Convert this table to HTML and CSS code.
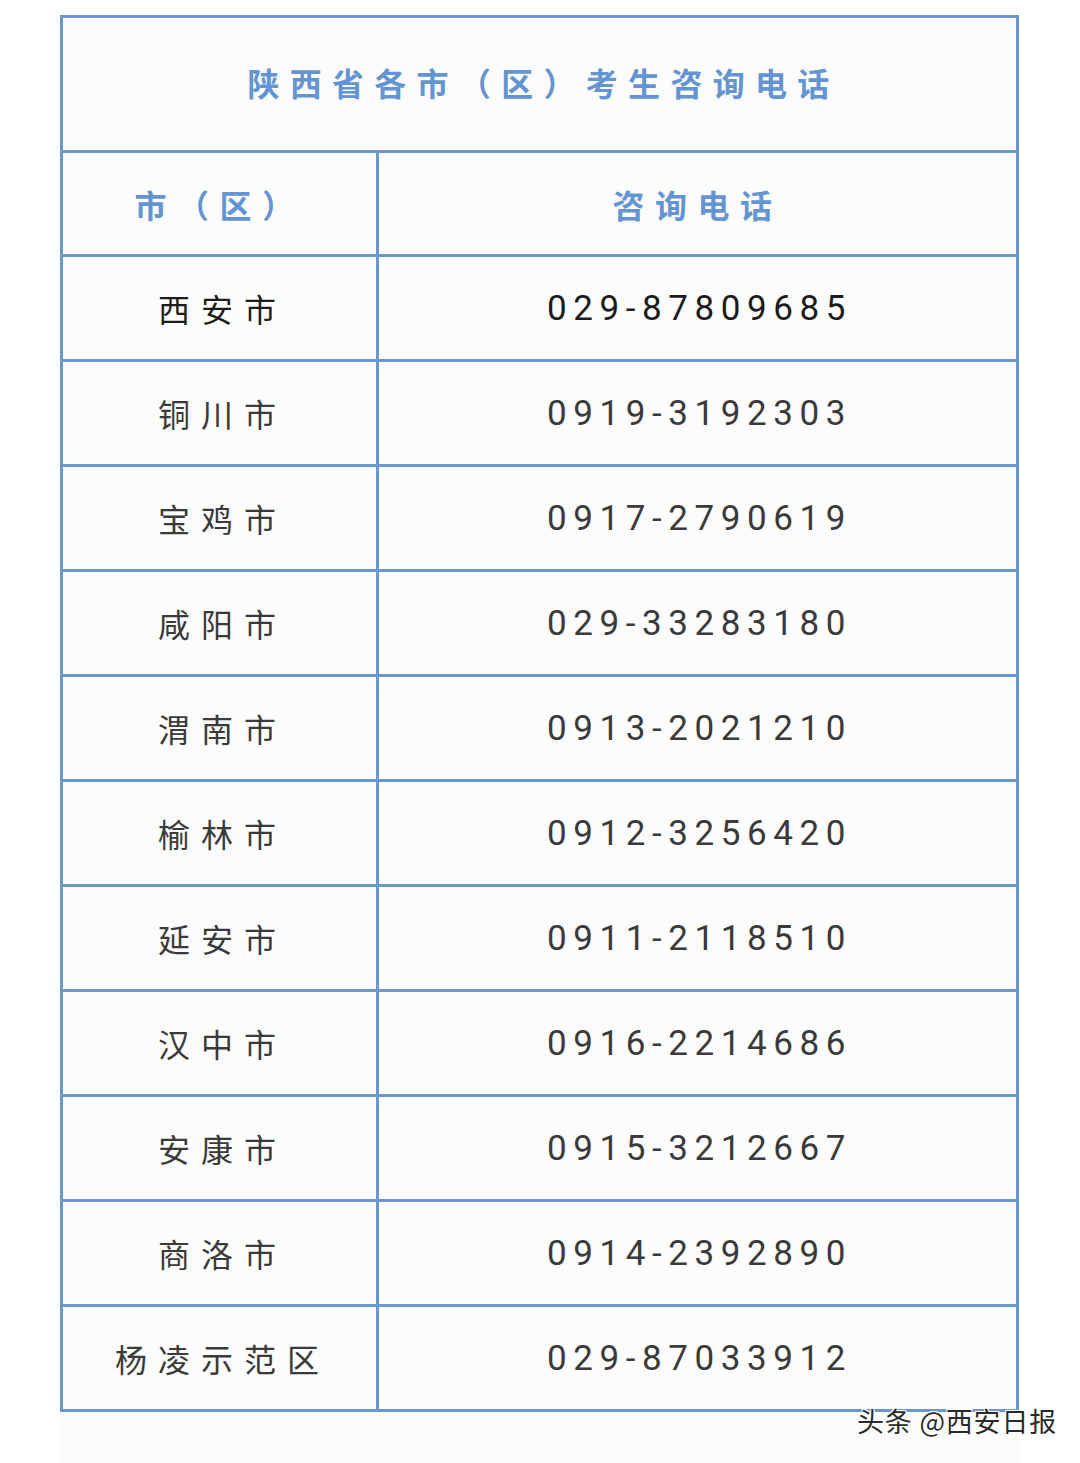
FILE: index.html
```html
<!DOCTYPE html>
<html lang="zh-CN">
<head>
<meta charset="utf-8">
<title>陕西省各市（区）考生咨询电话</title>
<link rel="stylesheet" href="styles.css">
</head>
<body>
<div class="page">
  <div class="sheet">
    <div class="table">
      <div class="title">陕西省各市（区）考生咨询电话</div>
      <div class="row head">
        <div class="cell city">市（区）</div>
        <div class="cell phone">咨询电话</div>
      </div>
      <div class="row first">
        <div class="cell city">西安市</div>
        <div class="cell phone">029-87809685</div>
      </div>
      <div class="row">
        <div class="cell city">铜川市</div>
        <div class="cell phone">0919-3192303</div>
      </div>
      <div class="row">
        <div class="cell city">宝鸡市</div>
        <div class="cell phone">0917-2790619</div>
      </div>
      <div class="row">
        <div class="cell city">咸阳市</div>
        <div class="cell phone">029-33283180</div>
      </div>
      <div class="row">
        <div class="cell city">渭南市</div>
        <div class="cell phone">0913-2021210</div>
      </div>
      <div class="row">
        <div class="cell city">榆林市</div>
        <div class="cell phone">0912-3256420</div>
      </div>
      <div class="row">
        <div class="cell city">延安市</div>
        <div class="cell phone">0911-2118510</div>
      </div>
      <div class="row">
        <div class="cell city">汉中市</div>
        <div class="cell phone">0916-2214686</div>
      </div>
      <div class="row">
        <div class="cell city">安康市</div>
        <div class="cell phone">0915-3212667</div>
      </div>
      <div class="row">
        <div class="cell city">商洛市</div>
        <div class="cell phone">0914-2392890</div>
      </div>
      <div class="row">
        <div class="cell city">杨凌示范区</div>
        <div class="cell phone">029-87033912</div>
      </div>
    </div>
  </div>
  <div class="watermark">头条 @西安日报</div>
</div>
</body>
</html>
```

FILE: styles.css
```css
html, body {
  margin: 0;
  padding: 0;
  background: #ffffff;
}

.page {
  position: relative;
  width: 1080px;
  height: 1463px;
  overflow: hidden;
  font-family: Roboto, "Noto Sans CJK SC", sans-serif;
}

.sheet {
  margin-left: 60px;
  width: 959px;
  height: 1463px;
  padding-top: 15px;
  box-sizing: border-box;
  background: linear-gradient(#ffffff 0, #ffffff 15px, #fbfbfb 15px);
}

.table {
  border: 3px solid #6c97ca;
  background: #fcfcfc;
  display: flex;
  flex-direction: column;
}

.title {
  height: 132px;
  box-sizing: border-box;
  padding-bottom: 4px;
  display: flex;
  align-items: center;
  justify-content: center;
  font-family: "Noto Sans CJK SC", sans-serif;
  font-size: 32px;
  font-weight: 700;
  letter-spacing: 10.3px;
  padding-left: 8px;
  color: #6494d2;
}

.row {
  display: grid;
  grid-template-columns: 316px 1fr;
  height: 102px;
  border-top: 3px solid #6c97ca;
}

.row.head {
  height: 101px;
}

.cell {
  display: flex;
  align-items: center;
  justify-content: center;
}

.cell.city {
  border-right: 3px solid #6c97ca;
  font-family: "Noto Sans CJK SC", sans-serif;
  font-size: 32px;
  letter-spacing: 11px;
  padding-left: 6px;
  color: #3a3a3a;
}

.cell.phone {
  font-family: Roboto, "Noto Sans CJK SC", sans-serif;
  font-size: 35px;
  letter-spacing: 6.6px;
  padding-left: 4px;
  color: #3a3a3a;
}

.row.head .cell {
  font-family: "Noto Sans CJK SC", sans-serif;
  font-size: 32px;
  font-weight: 700;
  letter-spacing: 10.5px;
  color: #6494d2;
}

.row.head .cell.city {
  padding-left: 0;
}

.row.head .cell.phone {
  padding-left: 0;
}

.row.first .cell {
  color: #1c1c1c;
}

.watermark {
  position: absolute;
  left: 857px;
  top: 1404px;
  font-family: "Noto Sans CJK SC", sans-serif;
  font-size: 27px;
  letter-spacing: 0.8px;
  line-height: 34px;
  color: #2a2a2a;
  white-space: nowrap;
  text-shadow: 1px 1px 0 #ffffff, -1px -1px 0 #ffffff, 1px -1px 0 #ffffff, -1px 1px 0 #ffffff;
}
```
